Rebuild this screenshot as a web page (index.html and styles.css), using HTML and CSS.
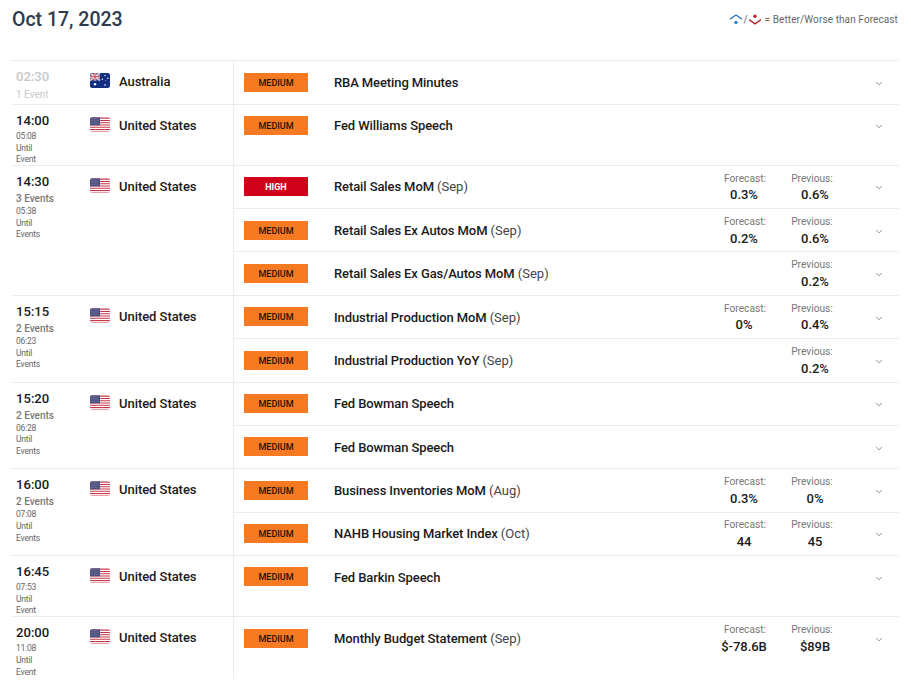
FILE: index.html
```html
<!DOCTYPE html>
<html lang="en">
<head>
<meta charset="utf-8">
<title>Economic Calendar</title>
<link rel="stylesheet" href="styles.css">
</head>
<body>
<svg class="defs" width="0" height="0" aria-hidden="true">
  <defs>
    <symbol id="us" viewBox="0 0 20 15">
      <rect width="20" height="15" fill="#fff"/>
      <path d="M0 .6h20v1.2H0zM0 2.9h20v1.1H0zM0 5.2h20v1.1H0zM0 7.4h20v1.2H0zM0 9.7h20v1.1H0zM0 11.9h20v1.2H0z" fill="#c8384a"/>
      <path d="M0 13.7h20V15H0z" fill="#e8a0a8"/>
      <path d="M0 0h20v.6H0z" fill="#e8a0a8"/>
      <rect width="10" height="8" y=".3" fill="#4a4f80"/>
      <path d="M1.5 1.6h7M1 3.2h8M1.5 4.8h7M1 6.4h8" stroke="#aab" stroke-width=".6" stroke-dasharray=".6 .8"/>
    </symbol>
    <symbol id="au" viewBox="0 0 20 15">
      <rect width="20" height="15" fill="#12307f"/>
      <rect width="10" height="7.5" fill="#5a5f95"/>
      <path d="M0 0l10 7.5M10 0L0 7.5" stroke="#e3c3cc" stroke-width="1.6"/>
      <path d="M5 0v7.5M0 3.75h10" stroke="#fff" stroke-width="2.2"/>
      <path d="M5 0v7.5M0 3.75h10" stroke="#d4304a" stroke-width="1.2"/>
      <circle cx="5" cy="11.2" r="1.2" fill="#fff"/>
      <circle cx="15" cy="2.5" r=".7" fill="#fff"/>
      <circle cx="15" cy="12" r=".8" fill="#fff"/>
      <circle cx="12.4" cy="6.2" r=".7" fill="#fff"/>
      <circle cx="17.8" cy="5.2" r=".7" fill="#fff"/>
      <circle cx="15.8" cy="7.4" r=".4" fill="#fff"/>
    </symbol>
    <symbol id="chev" viewBox="0 0 8 5">
      <path d="M1 1l3 2.8L7 1" fill="none" stroke="#9a9a9a" stroke-width="1"/>
    </symbol>
  </defs>
</svg>

<header class="top">
  <h1 class="date">Oct 17, 2023</h1>
  <div class="legend">
    <svg class="lg-icon" viewBox="1 0 12 11"><path d="M1 5.2L7 1l6 4.2" fill="none" stroke="#2f7ec0" stroke-width="1.4"/><circle cx="7" cy="8.4" r="1.7" fill="#2f7ec0"/></svg>
    <span class="lg-slash">/</span>
    <svg class="lg-icon" viewBox="1 0 12 11"><circle cx="7" cy="2.2" r="1.7" fill="#b3262b"/><path d="M1 5.6L7 9.8l6-4.2" fill="none" stroke="#b3262b" stroke-width="1.4"/></svg>
    <span class="lg-text">= Better/Worse than Forecast</span>
  </div>
</header>

<main class="list">
  <section class="group muted">
    <div class="when"><div class="time">02:30</div><div class="count">1 Event</div></div>
    <div class="country"><svg class="flag"><use href="#au"/></svg><span>Australia</span></div>
    <div class="events">
      <div class="event"><span class="badge medium">MEDIUM</span><span class="name">RBA Meeting Minutes</span><svg class="chev"><use href="#chev"/></svg></div>
    </div>
  </section>

  <section class="group">
    <div class="when"><div class="time">14:00</div><div class="until">05:08</div><div class="until">Until</div><div class="until">Event</div></div>
    <div class="country"><svg class="flag"><use href="#us"/></svg><span>United States</span></div>
    <div class="events">
      <div class="event"><span class="badge medium">MEDIUM</span><span class="name">Fed Williams Speech</span><svg class="chev"><use href="#chev"/></svg></div>
    </div>
  </section>

  <section class="group">
    <div class="when"><div class="time">14:30</div><div class="count">3 Events</div><div class="until">05:38</div><div class="until">Until</div><div class="until">Events</div></div>
    <div class="country"><svg class="flag"><use href="#us"/></svg><span>United States</span></div>
    <div class="events">
      <div class="event"><span class="badge high">HIGH</span><span class="name">Retail Sales MoM <em>(Sep)</em></span><div class="stat fc"><small>Forecast:</small><b>0.3%</b></div><div class="stat pv"><small>Previous:</small><b>0.6%</b></div><svg class="chev"><use href="#chev"/></svg></div>
      <div class="event"><span class="badge medium">MEDIUM</span><span class="name">Retail Sales Ex Autos MoM <em>(Sep)</em></span><div class="stat fc"><small>Forecast:</small><b>0.2%</b></div><div class="stat pv"><small>Previous:</small><b>0.6%</b></div><svg class="chev"><use href="#chev"/></svg></div>
      <div class="event"><span class="badge medium">MEDIUM</span><span class="name">Retail Sales Ex Gas/Autos MoM <em>(Sep)</em></span><div class="stat pv"><small>Previous:</small><b>0.2%</b></div><svg class="chev"><use href="#chev"/></svg></div>
    </div>
  </section>

  <section class="group">
    <div class="when"><div class="time">15:15</div><div class="count">2 Events</div><div class="until">06:23</div><div class="until">Until</div><div class="until">Events</div></div>
    <div class="country"><svg class="flag"><use href="#us"/></svg><span>United States</span></div>
    <div class="events">
      <div class="event"><span class="badge medium">MEDIUM</span><span class="name">Industrial Production MoM <em>(Sep)</em></span><div class="stat fc"><small>Forecast:</small><b>0%</b></div><div class="stat pv"><small>Previous:</small><b>0.4%</b></div><svg class="chev"><use href="#chev"/></svg></div>
      <div class="event"><span class="badge medium">MEDIUM</span><span class="name">Industrial Production YoY <em>(Sep)</em></span><div class="stat pv"><small>Previous:</small><b>0.2%</b></div><svg class="chev"><use href="#chev"/></svg></div>
    </div>
  </section>

  <section class="group">
    <div class="when"><div class="time">15:20</div><div class="count">2 Events</div><div class="until">06:28</div><div class="until">Until</div><div class="until">Events</div></div>
    <div class="country"><svg class="flag"><use href="#us"/></svg><span>United States</span></div>
    <div class="events">
      <div class="event"><span class="badge medium">MEDIUM</span><span class="name">Fed Bowman Speech</span><svg class="chev"><use href="#chev"/></svg></div>
      <div class="event"><span class="badge medium">MEDIUM</span><span class="name">Fed Bowman Speech</span><svg class="chev"><use href="#chev"/></svg></div>
    </div>
  </section>

  <section class="group">
    <div class="when"><div class="time">16:00</div><div class="count">2 Events</div><div class="until">07:08</div><div class="until">Until</div><div class="until">Events</div></div>
    <div class="country"><svg class="flag"><use href="#us"/></svg><span>United States</span></div>
    <div class="events">
      <div class="event"><span class="badge medium">MEDIUM</span><span class="name">Business Inventories MoM <em>(Aug)</em></span><div class="stat fc"><small>Forecast:</small><b>0.3%</b></div><div class="stat pv"><small>Previous:</small><b>0%</b></div><svg class="chev"><use href="#chev"/></svg></div>
      <div class="event"><span class="badge medium">MEDIUM</span><span class="name">NAHB Housing Market Index <em>(Oct)</em></span><div class="stat fc"><small>Forecast:</small><b>44</b></div><div class="stat pv"><small>Previous:</small><b>45</b></div><svg class="chev"><use href="#chev"/></svg></div>
    </div>
  </section>

  <section class="group">
    <div class="when"><div class="time">16:45</div><div class="until">07:53</div><div class="until">Until</div><div class="until">Event</div></div>
    <div class="country"><svg class="flag"><use href="#us"/></svg><span>United States</span></div>
    <div class="events">
      <div class="event"><span class="badge medium">MEDIUM</span><span class="name">Fed Barkin Speech</span><svg class="chev"><use href="#chev"/></svg></div>
    </div>
  </section>

  <section class="group last">
    <div class="when"><div class="time">20:00</div><div class="until">11:08</div><div class="until">Until</div><div class="until">Event</div></div>
    <div class="country"><svg class="flag"><use href="#us"/></svg><span>United States</span></div>
    <div class="events">
      <div class="event"><span class="badge medium">MEDIUM</span><span class="name">Monthly Budget Statement <em>(Sep)</em></span><div class="stat fc"><small>Forecast:</small><b>$-78.6B</b></div><div class="stat pv"><small>Previous:</small><b>$89B</b></div><svg class="chev"><use href="#chev"/></svg></div>
    </div>
  </section>
</main>
</body>
</html>
```

FILE: styles.css
```css
* { box-sizing: border-box; }
html, body { margin: 0; padding: 0; }
body {
  background: #fff;
  font-family: Roboto, "Liberation Sans", sans-serif;
  color: #1a1a1a;
  height: 687px;
  overflow: hidden;
}
.defs { position: absolute; }

.top {
  display: flex;
  justify-content: space-between;
  padding: 8px 12px 0 12px;
  height: 60.4px;
}
.date {
  margin: 0;
  font-size: 19.5px;
  line-height: 23px;
  font-weight: 500;
  color: #2e3a4d;
}
.legend {
  display: flex;
  align-items: center;
  align-self: flex-start;
  margin: 4px 1px 0 0;
  height: 14px;
  font-size: 10px;
  color: #666;
}
.lg-icon { width: 12px; height: 11px; }
.lg-slash { margin: 0 1px; }
.lg-text { margin-left: 4px; letter-spacing: .1px; }

.list { margin: 0 12px; }
.group {
  display: grid;
  grid-template-columns: 78px 143px 1fr;
  border-top: 1px solid #ececec;
}
.last { min-height: 62.5px; }
.muted .time, .muted .count { color: #c8c8c8; }

.when { padding: 7px 0 0 4px; height: 60.1px; }
.muted .when { height: auto; }
.time {
  font-size: 13.1px;
  line-height: 18px;
  margin-bottom: 1px;
  font-weight: 500;
  color: #1a1a1a;
}
.count {
  font-size: 10px;
  line-height: 14px;
  font-weight: 500;
  color: #777;
}
.muted .count { font-weight: 400; margin-top: 2px; }
.until {
  font-size: 8.5px;
  line-height: 11.7px;
  letter-spacing: -.2px;
  color: #666;
}

.country {
  display: flex;
  align-items: flex-start;
  gap: 9px;
  padding-top: 10.8px;
  font-size: 13px;
  line-height: 20px;
  font-weight: 500;
  color: #1a1a1a;
  letter-spacing: -.05px;
}
.flag {
  width: 20px;
  height: 15px;
  border-radius: 2.5px;
  margin-top: 1px;
}

.events { border-left: 1px solid #ececec; min-width: 0; }
.event {
  display: flex;
  align-items: flex-start;
  height: 43.35px;
  padding-left: 10px;
  border-top: 1px solid #ececec;
}
.event:first-child { border-top: 0; height: 42.35px; }
.muted .event:first-child { height: 42.5px; }
.event:nth-child(2):not(:last-child) { height: 43px; }
.event:nth-child(3) { height: 43.7px; }

.badge {
  width: 64px;
  height: 19px;
  margin-top: 11.4px;
  flex: none;
  text-align: center;
  font-size: 9px;
  line-height: 20.5px;
  font-weight: 500;
}
.medium { background: #f57a21; color: #1f1206; }
.high { background: #d0021b; color: #fff; font-weight: 700; }

.name {
  flex: 1;
  margin: 11.5px 0 0 26px;
  font-size: 13px;
  line-height: 19px;
  font-weight: 500;
  color: #1a1a1a;
  letter-spacing: -.1px;
}
.name em { font-style: normal; font-weight: 400; color: #444; letter-spacing: 0; }

.stat {
  width: 66px;
  margin-top: 5.6px;
  text-align: center;
}
.stat small {
  display: block;
  font-size: 10.2px;
  line-height: 13px;
  color: #777;
}
.stat b {
  display: block;
  margin-top: 1.8px;
  font-size: 13px;
  line-height: 17px;
  font-weight: 500;
  color: #1a1a1a;
  letter-spacing: -.05px;
}
.fc small { padding-right: 2px; }
.fc b { padding-right: 4px; }
.pv b { padding-left: 6px; }
.chev {
  width: 8px;
  height: 5px;
  flex: none;
  margin: 19.5px 16px 0 30px;
}
```
